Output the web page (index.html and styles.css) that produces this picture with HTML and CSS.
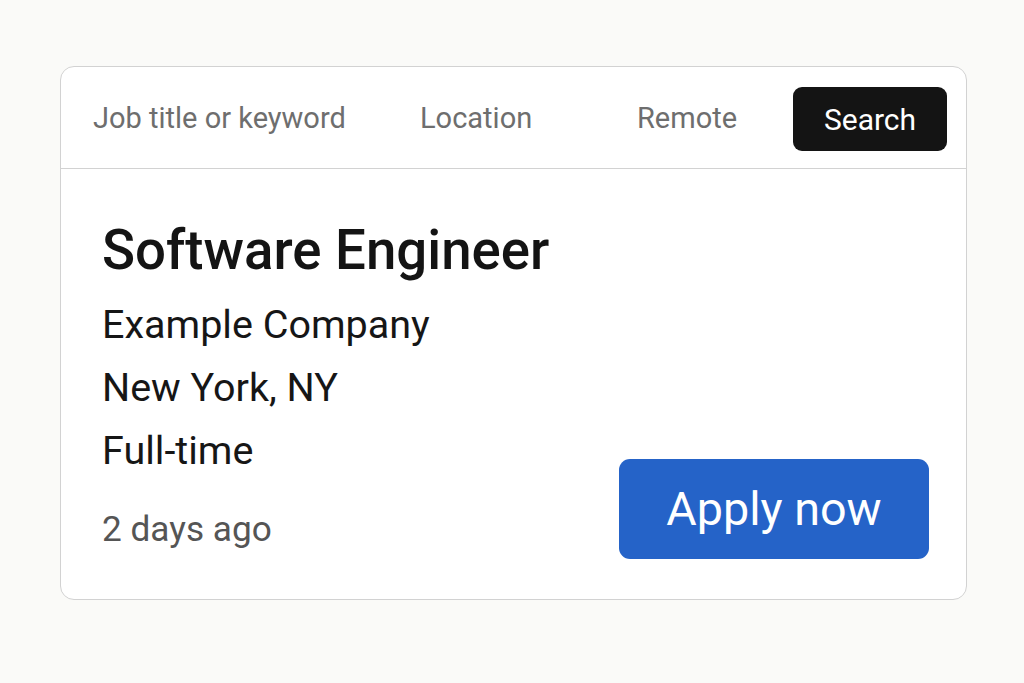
FILE: index.html
```html
<!DOCTYPE html>
<html lang="en">
<head>
<meta charset="utf-8">
<title>Job search</title>
<link rel="stylesheet" href="styles.css">
</head>
<body>
<main class="page">
  <article class="card">
    <div class="search">
      <span class="field field-keyword">Job title or keyword</span>
      <span class="field field-location">Location</span>
      <span class="field field-remote">Remote</span>
      <button class="btn-search" type="button">Search</button>
    </div>
    <div class="job">
      <div class="job-info">
        <h1 class="job-title">Software Engineer</h1>
        <p class="job-line">Example Company</p>
        <p class="job-line">New York, NY</p>
        <p class="job-line">Full-time</p>
        <p class="job-posted">2 days ago</p>
      </div>
      <button class="btn-apply" type="button">Apply now</button>
    </div>
  </article>
</main>
</body>
</html>
```
FILE: styles.css
```css
* { box-sizing: border-box; }

html, body {
  margin: 0;
  padding: 0;
}

body {
  background: #fafaf8;
  font-family: Roboto, "Noto Sans", "Liberation Sans", sans-serif;
  color: #151515;
  width: 1024px;
  height: 683px;
  overflow: hidden;
}

.page {
  padding-top: 66px;
  padding-left: 60px;
}

.card {
  width: 907px;
  height: 534px;
  background: #ffffff;
  border: 1.5px solid #d2d2d2;
  border-radius: 14px;
  display: flex;
  flex-direction: column;
  overflow: hidden;
}

.search {
  height: 102px;
  flex: none;
  display: flex;
  align-items: center;
  padding: 0 19px 0 32px;
  border-bottom: 1.5px solid #d2d2d2;
}

.field {
  font-size: 29px;
  color: #6e6e6e;
}

.field-keyword { width: 327px; }
.field-location { width: 217px; }
.field-remote { flex: 1; }

.btn-search {
  width: 154px;
  height: 64px;
  margin-top: 3px;
  border: 0;
  border-radius: 9px;
  background: #141414;
  color: #ffffff;
  font-family: inherit;
  font-size: 30px;
  padding: 0;
}

.job {
  flex: 1;
  min-height: 0;
  display: flex;
  justify-content: space-between;
  align-items: flex-end;
  padding: 0 37px 38px 41px;
}

.job-title {
  margin: 0 0 7px;
  font-size: 54.6px;
  line-height: 72px;
  font-weight: 500;
  color: #141414;
}

.job-line,
.job-posted {
  margin: 0;
  font-size: 39.5px;
  line-height: 63px;
  color: #161616;
}

.job-posted {
  margin-top: 16px;
  font-size: 35.2px;
  color: #555555;
}

.btn-apply {
  width: 310px;
  height: 100px;
  margin-bottom: 2px;
  border: 0;
  border-radius: 11px;
  background: #2563c8;
  color: #ffffff;
  font-family: inherit;
  font-size: 46.7px;
  font-weight: 400;
  padding: 0;
}
```
